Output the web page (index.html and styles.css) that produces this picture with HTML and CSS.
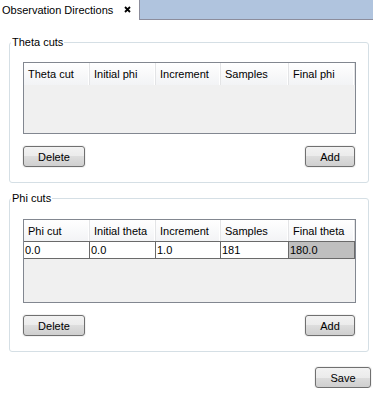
FILE: index.html
```html
<!DOCTYPE html>
<html lang="en">

<head>
  <meta charset="UTF-8" />
  <title>Observation Directions</title>
  <link rel="stylesheet" href="styles.css">
</head>

<body>
  <div class="tabbar">
    <div class="tab">
      <span>Observation Directions</span>
      <svg class="tab-close" width="7" height="7" viewBox="0 0 7 7">
        <path d="M1 1 L6 6 M6 1 L1 6" stroke="#000" stroke-width="1.8" />
      </svg>
    </div>
    <div class="tab-fill"></div>
  </div>

  <div class="content">
    <fieldset class="group">
      <legend>Theta cuts</legend>
      <div class="table table-theta">
        <div class="table-head">
          <div>Theta cut</div>
          <div>Initial phi</div>
          <div>Increment</div>
          <div>Samples</div>
          <div>Final phi</div>
        </div>
      </div>
      <div class="actions">
        <button class="btn btn-wide">Delete</button>
        <button class="btn">Add</button>
      </div>
    </fieldset>

    <fieldset class="group">
      <legend>Phi cuts</legend>
      <div class="table table-phi">
        <div class="table-head">
          <div>Phi cut</div>
          <div>Initial theta</div>
          <div>Increment</div>
          <div>Samples</div>
          <div>Final theta</div>
        </div>
        <div class="table-row">
          <div>0.0</div>
          <div>0.0</div>
          <div>1.0</div>
          <div>181</div>
          <div class="readonly">180.0</div>
        </div>
      </div>
      <div class="actions">
        <button class="btn btn-wide">Delete</button>
        <button class="btn">Add</button>
      </div>
    </fieldset>

    <div class="footer">
      <button class="btn btn-save">Save</button>
    </div>
  </div>
</body>

</html>
```

FILE: styles.css
```css
body {
  margin: 0;
  background: #fff;
  font-family: 'Liberation Sans', Arial, sans-serif;
  font-size: 11px;
  color: #000;
}

.tabbar {
  display: flex;
  height: 20px;
}

.tab {
  width: 139px;
  display: flex;
  align-items: center;
  padding: 0 0 1px 2px;
  box-sizing: border-box;
  background: #fff;
}

.tab-close {
  margin-left: 11px;
}

.tab-fill {
  flex: 1;
  background: #b0c4de;
  border-left: 1px solid #8c8d9c;
  border-bottom: 1px solid #8c8d9c;
}

.content {
  padding: 0 2px 0 9px;
}

.group {
  margin: 16px 2px 0 0;
  padding: 13px 12px 15px 13px;
  border: 1px solid #d5dfe5;
  border-radius: 3px;
}

.group + .group {
  margin-top: 9px;
}

.group legend {
  padding: 0 1px;
  margin-left: -12px;
  line-height: 13px;
}

.table {
  border: 1px solid #828790;
  background: #f0f0f0;
}

.table-theta {
  height: 70px;
}

.table-phi {
  height: 82px;
  margin-top: 1px;
}

.table-head,
.table-row {
  display: grid;
  grid-template-columns: 66px 66px 65px 68px 1fr;
}

.table-head div {
  height: 22px;
  line-height: 22px;
  padding-left: 4px;
  background: linear-gradient(#ffffff, #f2f3f5);
  border-right: 1px solid #e3e4e6;
  box-shadow: inset -1px 0 0 #fff;
}

.table-row div {
  height: 16px;
  line-height: 16px;
  padding-left: 1px;
  background: #fff;
  border-right: 1px solid #6a6a6a;
  border-bottom: 1px solid #6a6a6a;
  border-top: 1px solid #6a6a6a;
  margin-top: -1px;
}

.table-row div.readonly {
  background: #bfbfbf;
}

.actions {
  display: flex;
  justify-content: space-between;
  margin-top: 12px;
  margin-right: 1px;
}

.btn {
  width: 50px;
  height: 21px;
  padding: 0;
  font-family: inherit;
  font-size: 11px;
  color: #000;
  border: 1px solid #707070;
  border-radius: 3px;
  background: linear-gradient(#f2f2f2 0%, #ebebeb 50%, #dddddd 50%, #cfcfcf 100%);
  box-shadow: 0 0 0 1px #f3f3f3;
}

.btn-wide {
  width: 62px;
}

.footer {
  display: flex;
  justify-content: flex-end;
  margin-top: 15px;
}

.btn-save {
  width: 56px;
}
```
